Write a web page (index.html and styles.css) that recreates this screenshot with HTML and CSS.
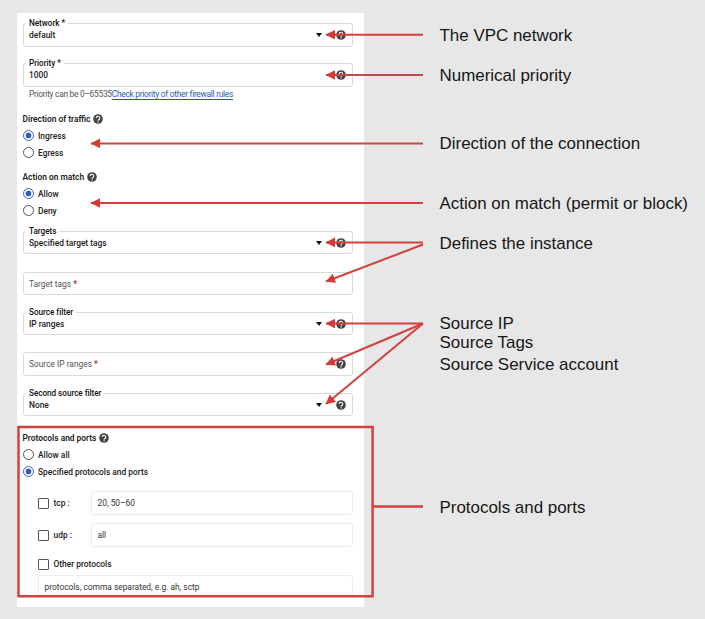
FILE: index.html
```html
<!DOCTYPE html>
<html lang="en">
<head>
<meta charset="utf-8">
<title>Firewall rule fields</title>
<link rel="stylesheet" href="styles.css">
</head>
<body>
<svg class="defs" width="0" height="0" aria-hidden="true">
  <symbol id="help" viewBox="0 0 24 24"><circle cx="12" cy="12" r="11.500" fill="#444"/><path d="M7.800 9.600a4.200 4.200 0 1 1 6.800 3.200c-1.500 1.200-2.400 1.600-2.400 3.200" fill="none" stroke="#fff" stroke-width="2.600"/><circle cx="12.200" cy="19" r="1.600" fill="#fff"/></symbol>
</svg>
<main class="slide">
  <form class="panel">
    <div class="field network"><span class="legend">Network *</span><span class="value">default</span><i class="caret"></i><svg class="help"><use href="#help"/></svg></div>
    <div class="field priority"><span class="legend">Priority *</span><span class="value">1000</span><svg class="help"><use href="#help"/></svg></div>
    <p class="hint">Priority can be 0–65535<a href="#">Check priority of other firewall rules</a></p>

    <section class="group direction">
      <h2>Direction of traffic <svg class="help"><use href="#help"/></svg></h2>
      <label class="choice"><i class="radio on"></i>Ingress</label>
      <label class="choice"><i class="radio"></i>Egress</label>
    </section>
    <section class="group action">
      <h2>Action on match <svg class="help"><use href="#help"/></svg></h2>
      <label class="choice"><i class="radio on"></i>Allow</label>
      <label class="choice"><i class="radio"></i>Deny</label>
    </section>

    <div class="field targets"><span class="legend">Targets</span><span class="value">Specified target tags</span><i class="caret"></i><svg class="help"><use href="#help"/></svg></div>
    <div class="field tags"><span class="value empty">Target tags <b>*</b></span></div>
    <div class="field source"><span class="legend">Source filter</span><span class="value">IP ranges</span><i class="caret"></i><svg class="help"><use href="#help"/></svg></div>
    <div class="field ranges"><span class="value empty">Source IP ranges <b>*</b></span><svg class="help"><use href="#help"/></svg></div>
    <div class="field second"><span class="legend">Second source filter</span><span class="value">None</span><i class="caret"></i><svg class="help"><use href="#help"/></svg></div>

    <section class="group protocols">
      <h2>Protocols and ports <svg class="help"><use href="#help"/></svg></h2>
      <label class="choice"><i class="radio"></i>Allow all</label>
      <label class="choice"><i class="radio on"></i>Specified protocols and ports</label>
    </section>
    <div class="port tcp"><label class="check"><i class="box"></i>tcp :</label><div class="entry">20, 50–60</div></div>
    <div class="port udp"><label class="check"><i class="box"></i>udp :</label><div class="entry">all</div></div>
    <label class="check other"><i class="box"></i>Other protocols</label>
    <div class="entry cut">protocols, comma separated, e.g. ah, sctp</div>
  </form>

  <aside class="notes">
    <p class="n-vpc">The VPC network</p>
    <p class="n-priority">Numerical priority</p>
    <p class="n-direction">Direction of the connection</p>
    <p class="n-action">Action on match (permit or block)</p>
    <p class="n-instance">Defines the instance</p>
    <p class="n-ip">Source IP</p>
    <p class="n-tags">Source Tags</p>
    <p class="n-account">Source Service account</p>
    <p class="n-ports">Protocols and ports</p>
  </aside>

  <svg class="arrows" viewBox="0 0 705 619" aria-hidden="true">
    <defs><marker id="head" markerUnits="userSpaceOnUse" markerWidth="10" markerHeight="10" refX="9" refY="4.800" orient="auto"><path d="M0 0 9.500 4.800 0 9.600Z"/></marker></defs>
    <g class="lines">
      <path d="M423 34.700H326"/>
      <path class="dim" d="M423 75H326"/>
      <path class="dim" d="M423 143.400H91"/>
      <path d="M423 203H91"/>
      <path d="M423 242.400H326"/>
      <path d="M423 244.500 326 281.500"/>
      <path d="M423 323.500H326"/>
      <path d="M423 323.500 326 364.500"/>
      <path d="M423 323.500 326 404"/>
    </g>
    <path class="frame" d="M18.500 427H372.600V596.300H18.500ZM373 506.500H423"/>
  </svg>
</main>
</body>
</html>
```

FILE: styles.css
```css
* { box-sizing: border-box; }
body {
  margin: 0;
  background: #e7e7e7;
  font-family: Roboto, "Liberation Sans", sans-serif;
  font-size: 8.4px;
  color: #222;
}
h2, p { margin: 0; }
.defs { position: absolute; }

.slide {
  position: relative;
  display: flex;
  align-items: flex-start;
  gap: 75.500px;
  height: 619px;
  padding: 13px 0 0 17px;
  overflow: hidden;
}

.panel {
  display: flex;
  flex-direction: column;
  flex: none;
  width: 347px;
  height: 594px;
  padding: 10px 11px 0 5.500px;
  background: #fff;
  font-weight: 500;
}

.field {
  position: relative;
  display: flex;
  align-items: center;
  flex: none;
  height: 23px;
  padding: 0 6px 0 5.500px;
  border: 1px solid #d9d9d9;
  border-radius: 3px;
}
.legend {
  position: absolute;
  top: -6px;
  left: 2.500px;
  padding: 0 3px;
  background: #fff;
  line-height: 10px;
  font-size: 8.200px;
  letter-spacing: -0.050px;
  font-weight: 500;
  color: #111;
}
.value { flex: 1; }
.empty { font-weight: 400; color: #555; }
.empty b { color: #b3263a; }
.caret {
  margin-right: 14px;
  border: 3.500px solid transparent;
  border-top: 4px solid #111;
  border-bottom: 0;
}
.help { flex: none; width: 10px; height: 10px; overflow: visible; }

.network, .priority, .ranges { height: 24px; }
.priority { margin-top: 16px; }
.hint {
  height: 14px;
  padding-left: 6.500px;
  line-height: 14px;
  font-size: 8.400px;
  letter-spacing: -0.280px;
  font-weight: 400;
  color: #555;
  white-space: nowrap;
}
.hint a { color: #2b5cab; text-underline-offset: 2px; }
.targets { margin-top: 12px; }
.tags { margin-top: 18px; }
.source, .ranges, .second { margin-top: 17px; }

.group h2, .choice {
  display: flex;
  align-items: center;
  height: 17px;
}
.group h2 { gap: 3px; font-size: 8.400px; font-weight: 600; }
.direction { margin-top: 9px; }
.action { margin-top: 7px; }
.protocols { margin-top: 13px; }
.radio {
  flex: none;
  width: 11px;
  height: 11px;
  margin-right: 4.500px;
  border: 1.200px solid #555;
  border-radius: 50%;
}
.radio.on {
  border-color: #3c67c0;
  background: radial-gradient(circle, #3059bd 2.600px, #fff 3.200px);
}

.port { display: flex; margin-left: 15.500px; }
.check { display: flex; align-items: center; flex: none; width: 53px; }
.box {
  flex: none;
  width: 11px;
  height: 11px;
  margin-right: 4.500px;
  border: 1.300px solid #555;
  border-radius: 1px;
}
.entry {
  flex: 1;
  height: 24px;
  padding-left: 5.500px;
  border: 1px solid #ececec;
  border-radius: 3px;
  line-height: 22px;
  font-weight: 400;
  color: #333;
}
.tcp { margin-top: 11px; }
.udp { margin-top: 8px; }
.check.other { width: auto; height: 14px; margin: 10px 0 0 15.500px; }
.entry.cut {
  flex: none;
  height: 20px;
  margin: 4px 0 0 15.500px;
  border-bottom: 0;
  border-radius: 3px 3px 0 0;
}

.notes {
  padding-top: 13px;
  font: 16.950px/20px "Liberation Sans", Arial, sans-serif;
  color: #161616;
  white-space: nowrap;
}
.n-priority { margin-top: 20px; }
.n-direction { margin-top: 48px; }
.n-action { margin-top: 40px; }
.n-instance { margin-top: 20px; }
.n-ip { margin-top: 60px; }
.n-tags { margin-top: -1px; }
.n-account { margin-top: 2px; }
.n-ports { margin-top: 123px; }

.arrows { position: absolute; inset: 0; width: 705px; height: 619px; fill: none; }
.lines path { stroke: #d2413d; stroke-width: 2; marker-end: url(#head); }
.lines .dim { stroke: #bd4c4a; }
marker path { fill: #d43a36; stroke: none; }
.frame { stroke: #d0433f; stroke-width: 2.500; }
```
